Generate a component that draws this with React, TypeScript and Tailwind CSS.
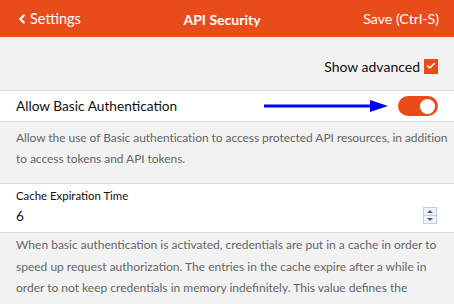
import { ChevronLeft, Check } from 'lucide-react'

const font = { fontFamily: 'Lato, "Open Sans", sans-serif' }

function Toggle() {
  return (
    <div className="w-[40px] h-[20px] rounded-full bg-[#e84c1b] flex items-center justify-end pr-[3px]">
      <div className="w-[15px] h-[15px] rounded-full bg-white" />
    </div>
  )
}

function Arrow() {
  return (
    <svg width="124" height="14" viewBox="0 0 124 14" className="block">
      <line x1="0" y1="7" x2="108" y2="7" stroke="#0000ff" strokeWidth="3" />
      <polygon points="106,1 124,7 106,13" fill="#0000ff" />
    </svg>
  )
}

function Spinner() {
  return (
    <div className="w-[14px] h-[17px] flex flex-col border border-[#c8ccd4] bg-[#f0f2f6]">
      <div className="flex-1 flex items-center justify-center border-b border-[#c8ccd4]">
        <div className="w-0 h-0 border-l-[3px] border-r-[3px] border-b-[3px] border-l-transparent border-r-transparent border-b-[#4a5a8a]" />
      </div>
      <div className="flex-1 flex items-center justify-center">
        <div className="w-0 h-0 border-l-[3px] border-r-[3px] border-t-[3px] border-l-transparent border-r-transparent border-t-[#4a5a8a]" />
      </div>
    </div>
  )
}

export default function App() {
  return (
    <div className="w-[454px] h-[304px] overflow-hidden bg-[#f2f2f2] text-[#111]" style={font}>
      {/* header */}
      <div className="h-[37px] bg-[#e84c1b] text-white flex items-center px-[15px] pt-[1px] text-[14.2px] relative">
        <div className="flex items-center gap-[1px]">
          <ChevronLeft className="w-[14px] h-[16px]" strokeWidth={4} />
          <span className="text-[14.5px]">Settings</span>
        </div>
        <div className="flex-1 text-center font-bold text-[14px]">API Security</div>
        <span>Save (Ctrl-S)</span>
      </div>

      <div className="h-[53px] flex items-center justify-end px-[16px] pt-[5px] gap-[4px] text-[14px]">
        <span>Show advanced</span>
        <div className="w-[14px] h-[15px] bg-[#e84c1b] flex items-center justify-center">
          <Check className="w-[10px] h-[10px] text-white" strokeWidth={3.5} />
        </div>
      </div>

      <div className="h-[32px] bg-white border-y border-[#dedede] flex items-center px-[16px] text-[13.7px]">
        <span className="flex-1">Allow Basic Authentication</span>
        <div className="mr-[10px]">
          <Arrow />
        </div>
        <Toggle />
      </div>

      <div className="h-[61px] pl-[16px] pt-[5px] text-[12px] tracking-[-0.06px] leading-[21px] text-[#666] whitespace-nowrap">
        Allow the use of Basic authentication to access protected API resources, in addition
        <br />
        to access tokens and API tokens.
      </div>

      <div className="h-[50px] bg-white border-y border-[#dedede] px-[16px] flex items-end pb-[6px]">
        <div className="flex-1">
          <div className="text-[11.4px] leading-[18px]">Cache Expiration Time</div>
          <div className="text-[13.5px] leading-[20px] mt-[1px]">6</div>
        </div>
        <div className="pr-[1px] pb-[2px]">
          <Spinner />
        </div>
      </div>

      <div className="pl-[16px] pt-[1px] text-[12px] leading-[21.7px] text-[#666] whitespace-nowrap">
        When basic authentication is activated, credentials are put in a cache in order to
        <br />
        speed up request authorization. The entries in the cache expire after a while in
        <br />
        order to not keep credentials in memory indefinitely. This value defines the
        <br />
        expiration time in hours. Set it to 0 for disabling the cache.
      </div>
    </div>
  )
}
